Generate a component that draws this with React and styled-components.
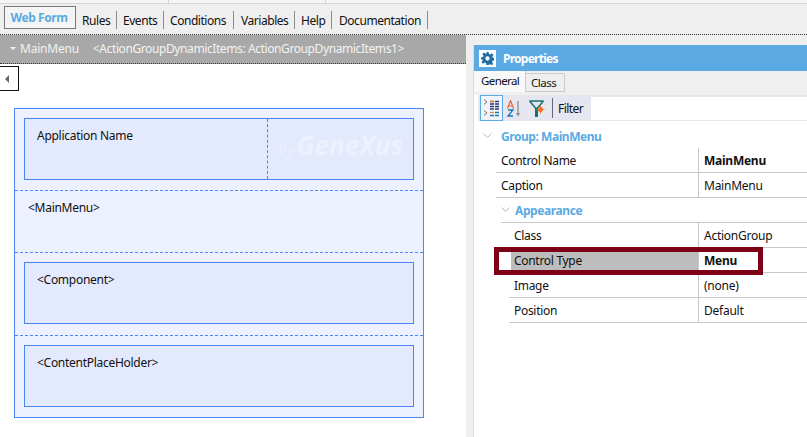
import React from "react";
import styled, { createGlobalStyle } from "styled-components";

const Global = createGlobalStyle`
  html, body { margin: 0; padding: 0; background: #fff; overflow: hidden; }
  body { font-family: "Noto Sans", "Open Sans", sans-serif; font-size: 12px; color: #111; }
  * { box-sizing: border-box; }
`;

const Page = styled.div`
  width: 807px; height: 437px; display: flex; flex-direction: column; overflow: hidden; background: #fff;
`;
const TopStrip = styled.div`
  height: 4px; flex: none; background: #f5f5f5; border-bottom: 1px solid #d6d6d6; display: flex; padding-left: 168px; gap: 156px;
`;
const StripTick = styled.span`
  width: 1px; height: 3px; background: #d6d6d6;
`;
const Toolbar = styled.div`
  height: 31px; flex: none; background: #efefef; border-bottom: 1px dotted #333; display: flex; align-items: flex-start; padding: 2px 0 0 4px;
`;
const ActiveTab = styled.div`
  width: 72px; height: 23px; border: 1px solid #7a7a7a; background: #f4f4f4; color: #5baae3; font-weight: 700;
  display: flex; align-items: center; justify-content: center; padding-right: 2px; font-size: 12px; letter-spacing: -0.45px;
`;
const Tab = styled.div`
  width: ${p => p.$w}px; height: 18px; margin-top: 5px; padding-left: ${p => p.$pad}px; border-right: 1px solid #8c8c8c; display: flex; align-items: center;
  font-size: 12px; letter-spacing: -0.45px; color: #111; white-space: nowrap;
`;
const Body = styled.div`
  flex: 1; display: flex; min-height: 0;
`;
const Designer = styled.div`
  width: 466px; flex: none; display: flex; flex-direction: column; background: #fff;
`;
const TitleBar = styled.div`
  height: 29px; flex: none; background: #a8a8a8; border-bottom: 1px dotted #333; color: #f3f3f3; display: flex; align-items: center; padding: 0 0 1px 10px; font-size: 12px; letter-spacing: -0.22px; white-space: nowrap;
`;
const Caret = styled.span`
  width: 0; height: 0; border-left: 3px solid transparent; border-right: 3px solid transparent; border-top: 3px solid #f3f3f3; margin-right: 4px;
`;
const Extra = styled.span`
  margin-left: 14px; letter-spacing: -0.4px;
`;
const Collapse = styled.button`
  width: 19px; height: 25px; margin-top: 2px; flex: none; padding: 0; background: #fff; border: 1px solid #111; border-left: none; display: flex; align-items: center; justify-content: center;
`;
const CollapseArrow = styled.span`
  width: 0; height: 0; border-top: 4px solid transparent; border-bottom: 4px solid transparent; border-right: 4px solid #666; margin-right: 4px;
`;
const Canvas = styled.div`
  margin: 17px 0 0 14px; width: 410px; height: 310px; border: 1px solid #4a86f7; background: #edf0fe; display: flex; flex-direction: column; letter-spacing: -0.28px;
`;
const Section = styled.div`
  height: ${p => p.$h}px; flex: none; padding: 9px 9px 0; border-bottom: ${p => (p.$last ? "none" : "1px dashed #4a86f7")};
`;
const PlainSection = styled(Section)`
  padding: 8px 13px 0;
  line-height: 17px;
`;
const Box = styled.div`
  height: 62px; border: 1px solid #4a86f7; background: #e4eafd; display: flex;
`;
const BoxCell = styled.div`
  flex: 1; padding: 8px 12px 0; line-height: 17px;
`;
const LogoCell = styled.div`
  width: 146px; flex: none; border-left: 1px dashed #4a86f7; display: flex; align-items: baseline; padding: 10px 0 0 10px; color: #edf0fe; font-style: italic; font-family: "Open Sans", sans-serif; letter-spacing: 0;
`;
const LogoBy = styled.span`
  font-size: 15px; margin-right: 3px;
`;
const LogoName = styled.span`
  font-size: 26px; font-weight: 700; letter-spacing: 0; line-height: 32px;
`;
const Gutter = styled.div`
  width: 8px; flex: none; background: #efefef; border-right: 1px solid #dcdcdc;
`;
const Panel = styled.div`
  flex: 1; display: flex; flex-direction: column; position: relative; background: #fff;
`;
const PanelTop = styled.div`
  height: 10px; flex: none; background: #efefef; margin-left: -1px;
`;
const PanelHead = styled.div`
  height: 26px; flex: none; background: #5baae3; color: #fff; font-weight: 700; display: flex; align-items: center; padding-left: 5px; gap: 7px; font-size: 12px; letter-spacing: -0.75px;
`;
const GearBox = styled.span`
  width: 17px; height: 17px; background: #fff; display: flex; align-items: center; justify-content: center;
`;
const TabStrip = styled.div`
  height: 24px; flex: none; background: #efefef; display: flex; align-items: flex-start;
`;
const PanelTabOn = styled.div`
  width: 52px; height: 21px; background: #f8f8f8; border-right: 1px solid #ccc; padding: 0 0 0 7px; line-height: 19px; font-size: 11.5px; letter-spacing: -0.6px;
`;
const PanelTabOff = styled.div`
  width: 39px; height: 19px; margin-top: 2px; border: 1px solid #ccc; border-left: none; padding-left: 5px; line-height: 18px; font-size: 11.5px; letter-spacing: -0.5px;
`;
const IconBar = styled.div`
  height: 26px; flex: none; margin-left: 4px; background: #e6e6f0; display: flex; align-items: center; position: relative;
`;
const IconBtn = styled.span`
  width: 23px; height: 26px; flex: none; margin-left: 2px; border: 1px solid #5baae3; background: #f2f4fb; display: flex;
`;
const IconPlain = styled.span`
  width: ${p => p.$w}px; flex: none; display: flex; align-items: center; justify-content: center;
`;
const Sep = styled.span`
  width: 1px; height: 20px; background: #667; margin: 0 5px 0 3px;
`;
const FilterText = styled.span`
  width: 33px; flex: none; letter-spacing: -0.55px;
`;
const FilterInput = styled.div`
  flex: 1; height: 23px; background: #fff;
`;
const Groups = styled.div`
  display: flex; flex-direction: column; flex: none;
`;
const GroupHead = styled.div`
  height: 27px; display: flex; align-items: center; color: #5baae3; font-weight: 700; padding: 3px 0 0 9px; font-size: 12px; letter-spacing: -0.45px;
`;
const SubHead = styled.div`
  height: 25px; display: flex; margin-left: ${p => p.$indent}px; align-items: center; color: #5baae3; font-weight: 700; border-bottom: 1px solid #c8c8c8; font-size: 12px; letter-spacing: -0.4px;
`;
const Chevron = styled.svg`
  width: 9px; height: 6px; flex: none; margin-right: ${p => p.$gap}px;
`;
const Row = styled.div`
  height: 25px; display: flex; align-items: center; margin-left: ${p => p.$indent}px; border-bottom: 1px solid #c8c8c8;
`;
const Label = styled.div`
  width: ${p => p.$w}px; flex: none; height: 100%; padding-left: 5px; display: flex; align-items: center; letter-spacing: -0.3px;
`;
const SelectedLabel = styled(Label)`
  background: #bdbdbd; margin-left: 2px; padding-left: 3px;
`;
const Value = styled.div`
  flex: 1; height: calc(100% + 1px); border-left: 1px solid #c8c8c8; padding-left: 5px; display: flex; align-items: center; letter-spacing: -0.25px; font-weight: ${p => (p.$bold ? 700 : 400)}; color: #111;
`;
const Highlight = styled.div`
  position: absolute; left: 20px; top: 212px; width: 269px; height: 28px; border: 5px solid #7c0016; pointer-events: none;
`;

function Gear() {
  return (
    <svg width="13" height="13" viewBox="0 0 24 24">
      <path fill="#1b6ea8" fillRule="evenodd" d="M10 0h4l.7 3.600 2.500 1 3-2.100 2.800 2.800-2.100 3 1 2.500 3.100.7v4l-3.600.7-1 2.500 2.100 3-2.800 2.800-3-2.100-2.500 1L14 24h-4l-.7-3.600-2.500-1-3 2.100-2.800-2.800 2.100-3-1-2.500L0 14v-4l3.600-.7 1-2.500-2.100-3 2.800-2.800 3 2.100 2.500-1zM12 8a4 4 0 1 0 0 8 4 4 0 0 0 0-8z" />
    </svg>
  );
}

function CategorizedIcon() {
  return (
    <svg width="21" height="24" viewBox="0 0 21 24" fill="none">
      <path d="M3 3.500l3 2.500-3 2.500M3 14.500l3 2.500-3 2.500" stroke="#777" strokeWidth="1" />
      <path d="M9 5.500h4M14 5.500h4M9 8h4M14 8h4M9 10.500h4M14 10.500h4M9 13h4M14 13h4" stroke="#2b3a78" strokeWidth="1.300" />
      <path d="M9 5.500h4" stroke="#e8882c" strokeWidth="1.300" />
      <path d="M9 16.500h4" stroke="#e8882c" strokeWidth="1.300" />
      <path d="M14 16.500h4M9 19.500h4M14 19.500h4" stroke="#1c78b8" strokeWidth="1.500" />
    </svg>
  );
}

function SortIcon() {
  return (
    <svg width="14" height="17" viewBox="0 0 14 17" fill="none">
      <path d="M.5 8.500L3.500.5l3 8M1.500 6h4" stroke="#e8682c" strokeWidth="1.200" />
      <path d="M1 10h5L1 16h5" stroke="#1c78b8" strokeWidth="1.300" />
      <path d="M11 1v13" stroke="#888" strokeWidth="1.200" />
      <path d="M9 13l2 3.500 2-3.500z" fill="#888" />
    </svg>
  );
}

function FilterIcon() {
  return (
    <svg width="16" height="17" viewBox="0 0 16 17" fill="none">
      <path d="M.5 1h14M.5 1l6 7M14.500 1l-6 7" stroke="#13756e" strokeWidth="1.500" />
      <path d="M6 7.500h3V17H6z" fill="#13756e" />
      <circle cx="11.500" cy="9.500" r="2.500" fill="#f0702c" />
      <path d="M11.500 5.500v8M7.500 9.500h8" stroke="#f0702c" strokeWidth=".9" />
    </svg>
  );
}

function Down() {
  return <path d="M.5.5L4.500 4.500 8.500.5" stroke="#b5b5b5" strokeWidth="1" fill="none" />;
}

export default function App() {
  return (
    <Page>
      <Global />
      <TopStrip><StripTick /><StripTick /></TopStrip>
      <Toolbar>
        <ActiveTab>Web Form</ActiveTab>
        <Tab $w={41} $pad={6}>Rules</Tab>
        <Tab $w={47} $pad={6}>Events</Tab>
        <Tab $w={70} $pad={6}>Conditions</Tab>
        <Tab $w={61} $pad={7}>Variables</Tab>
        <Tab $w={37} $pad={6}>Help</Tab>
        <Tab $w={96} $pad={7}>Documentation</Tab>
      </Toolbar>
      <Body>
        <Designer>
          <TitleBar>
            <Caret />
            MainMenu
            <Extra>&lt;ActionGroupDynamicItems: ActionGroupDynamicItems1&gt;</Extra>
          </TitleBar>
          <Collapse aria-label="Collapse"><CollapseArrow /></Collapse>
          <Canvas>
            <Section $h={82}>
              <Box>
                <BoxCell>Application Name</BoxCell>
                <LogoCell><LogoBy>by</LogoBy><LogoName>GeneXus</LogoName></LogoCell>
              </Box>
            </Section>
            <PlainSection $h={62}>&lt;MainMenu&gt;</PlainSection>
            <Section $h={83}><Box><BoxCell>&lt;Component&gt;</BoxCell></Box></Section>
            <Section $h={81} $last><Box><BoxCell>&lt;ContentPlaceHolder&gt;</BoxCell></Box></Section>
          </Canvas>
        </Designer>
        <Gutter />
        <Panel>
          <PanelTop />
          <PanelHead><GearBox><Gear /></GearBox>Properties</PanelHead>
          <TabStrip>
            <PanelTabOn>General</PanelTabOn>
            <PanelTabOff>Class</PanelTabOff>
          </TabStrip>
          <IconBar>
            <IconBtn><CategorizedIcon /></IconBtn>
            <IconPlain $w={22}><SortIcon /></IconPlain>
            <IconPlain $w={24}><FilterIcon /></IconPlain>
            <Sep />
            <FilterText>Filter</FilterText>
            <FilterInput />
          </IconBar>
          <Groups>
            <GroupHead><Chevron $gap={9} viewBox="0 0 9 6"><Down /></Chevron>Group: MainMenu</GroupHead>
            <Row $indent={22}><Label $w={202}>Control Name</Label><Value $bold>MainMenu</Value></Row>
            <Row $indent={22}><Label $w={202}>Caption</Label><Value>MainMenu</Value></Row>
            <SubHead $indent={27}><Chevron $gap={5} viewBox="0 0 9 6"><Down /></Chevron>Appearance</SubHead>
            <Row $indent={35}><Label $w={189}>Class</Label><Value>ActionGroup</Value></Row>
            <Row $indent={35}><SelectedLabel $w={187}>Control Type</SelectedLabel><Value $bold>Menu</Value></Row>
            <Row $indent={35}><Label $w={189}>Image</Label><Value>(none)</Value></Row>
            <Row $indent={35}><Label $w={189}>Position</Label><Value>Default</Value></Row>
          </Groups>
          <Highlight />
        </Panel>
      </Body>
    </Page>
  );
}
